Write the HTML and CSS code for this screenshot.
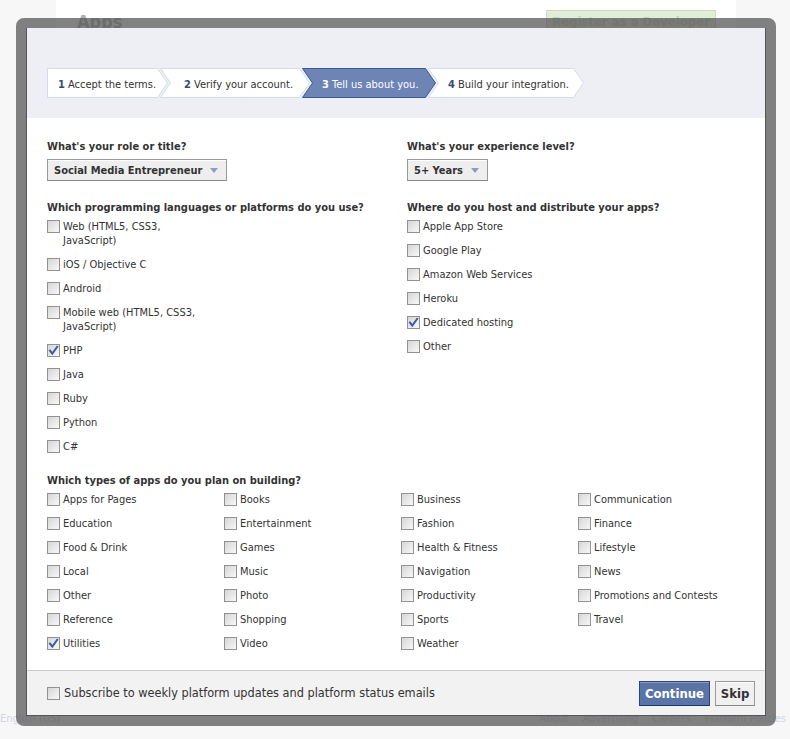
FILE: index.html
```html
<!DOCTYPE html>
<html>
<head>
<meta charset="utf-8">
<title>Apps</title>
<link rel="stylesheet" href="styles.css">
</head>
<body>
<div class="page">
  <div class="column">
    <div class="col-head">
      <h1 class="apps-title">Apps</h1>
      <span class="reg-btn">Register as a Developer</span>
    </div>
  </div>
  <div class="page-foot">
    <span class="lang">English (US)</span>
    <nav class="foot-links"><span>About</span><span>Advertising</span><span>Careers</span><span>Platform Policies</span></nav>
  </div>
</div>

<div class="dialog">
  <div class="dialog-inner">
    <div class="dialog-head">
      <div class="steps">
        <div class="step step-1">
          <svg class="step-bg" width="121" height="30" viewBox="0 0 121 30"><polygon points="0.5,0.5 110.5,0.5 120.5,15 110.5,29.5 0.5,29.5" /></svg>
          <span class="step-text"><b>1</b> Accept the terms.</span>
        </div>
        <div class="step step-2">
          <svg class="step-bg" width="150" height="30" viewBox="0 0 150 30"><polygon points="0.5,0.5 139.5,0.5 149.5,15 139.5,29.5 0.5,29.5 10.5,15" /></svg>
          <span class="step-text"><b>2</b> Verify your account.</span>
        </div>
        <div class="step step-3 active">
          <svg class="step-bg" width="134" height="30" viewBox="0 0 134 30"><polygon points="0.5,0.5 123.5,0.5 133.5,15 123.5,29.5 0.5,29.5 10.5,15" /></svg>
          <span class="step-text"><b>3</b> Tell us about you.</span>
        </div>
        <div class="step step-4">
          <svg class="step-bg" width="156" height="30" viewBox="0 0 156 30"><polygon points="0.5,0.5 145.5,0.5 155.5,15 145.5,29.5 0.5,29.5 10.5,15" /></svg>
          <span class="step-text"><b>4</b> Build your integration.</span>
        </div>
      </div>
    </div>

    <div class="dialog-body">
      <div class="two-col">
        <div class="col">
          <div class="q">What's your role or title?</div>
          <span class="select">Social Media Entrepreneur<i class="caret"></i></span>
        </div>
        <div class="col">
          <div class="q">What's your experience level?</div>
          <span class="select">5+ Years<i class="caret"></i></span>
        </div>
      </div>

      <div class="two-col section">
        <div class="col">
          <div class="q">Which programming languages or platforms do you use?</div>
          <ul class="checks narrow">
            <li class="check"><span class="box"></span><span class="lbl">Web (HTML5, CSS3, JavaScript)</span></li>
            <li class="check"><span class="box"></span><span class="lbl">iOS / Objective C</span></li>
            <li class="check"><span class="box"></span><span class="lbl">Android</span></li>
            <li class="check"><span class="box"></span><span class="lbl">Mobile web (HTML5, CSS3, JavaScript)</span></li>
            <li class="check"><span class="box checked"><svg viewBox="0 0 11 11" width="11" height="11"><path d="M2 5.6 L4.3 8.6 L9.2 1.8" /></svg></span><span class="lbl">PHP</span></li>
            <li class="check"><span class="box"></span><span class="lbl">Java</span></li>
            <li class="check"><span class="box"></span><span class="lbl">Ruby</span></li>
            <li class="check"><span class="box"></span><span class="lbl">Python</span></li>
            <li class="check"><span class="box"></span><span class="lbl">C#</span></li>
          </ul>
        </div>
        <div class="col">
          <div class="q">Where do you host and distribute your apps?</div>
          <ul class="checks">
            <li class="check"><span class="box"></span><span class="lbl">Apple App Store</span></li>
            <li class="check"><span class="box"></span><span class="lbl">Google Play</span></li>
            <li class="check"><span class="box"></span><span class="lbl">Amazon Web Services</span></li>
            <li class="check"><span class="box"></span><span class="lbl">Heroku</span></li>
            <li class="check"><span class="box checked"><svg viewBox="0 0 11 11" width="11" height="11"><path d="M2 5.6 L4.3 8.6 L9.2 1.8" /></svg></span><span class="lbl">Dedicated hosting</span></li>
            <li class="check"><span class="box"></span><span class="lbl">Other</span></li>
          </ul>
        </div>
      </div>

      <div class="section">
        <div class="q">Which types of apps do you plan on building?</div>
        <ul class="checks app-grid">
          <li class="check"><span class="box"></span><span class="lbl">Apps for Pages</span></li>
          <li class="check"><span class="box"></span><span class="lbl">Books</span></li>
          <li class="check"><span class="box"></span><span class="lbl">Business</span></li>
          <li class="check"><span class="box"></span><span class="lbl">Communication</span></li>
          <li class="check"><span class="box"></span><span class="lbl">Education</span></li>
          <li class="check"><span class="box"></span><span class="lbl">Entertainment</span></li>
          <li class="check"><span class="box"></span><span class="lbl">Fashion</span></li>
          <li class="check"><span class="box"></span><span class="lbl">Finance</span></li>
          <li class="check"><span class="box"></span><span class="lbl">Food &amp; Drink</span></li>
          <li class="check"><span class="box"></span><span class="lbl">Games</span></li>
          <li class="check"><span class="box"></span><span class="lbl">Health &amp; Fitness</span></li>
          <li class="check"><span class="box"></span><span class="lbl">Lifestyle</span></li>
          <li class="check"><span class="box"></span><span class="lbl">Local</span></li>
          <li class="check"><span class="box"></span><span class="lbl">Music</span></li>
          <li class="check"><span class="box"></span><span class="lbl">Navigation</span></li>
          <li class="check"><span class="box"></span><span class="lbl">News</span></li>
          <li class="check"><span class="box"></span><span class="lbl">Other</span></li>
          <li class="check"><span class="box"></span><span class="lbl">Photo</span></li>
          <li class="check"><span class="box"></span><span class="lbl">Productivity</span></li>
          <li class="check"><span class="box"></span><span class="lbl">Promotions and Contests</span></li>
          <li class="check"><span class="box"></span><span class="lbl">Reference</span></li>
          <li class="check"><span class="box"></span><span class="lbl">Shopping</span></li>
          <li class="check"><span class="box"></span><span class="lbl">Sports</span></li>
          <li class="check"><span class="box"></span><span class="lbl">Travel</span></li>
          <li class="check"><span class="box checked"><svg viewBox="0 0 11 11" width="11" height="11"><path d="M2 5.6 L4.3 8.6 L9.2 1.8" /></svg></span><span class="lbl">Utilities</span></li>
          <li class="check"><span class="box"></span><span class="lbl">Video</span></li>
          <li class="check"><span class="box"></span><span class="lbl">Weather</span></li>
        </ul>
      </div>
    </div>

    <div class="dialog-foot">
      <div class="check sub"><span class="box"></span><span class="lbl">Subscribe to weekly platform updates and platform status emails</span></div>
      <div class="buttons">
        <span class="btn btn-primary">Continue</span>
        <span class="btn btn-default">Skip</span>
      </div>
    </div>
  </div>
</div>
</body>
</html>
```

FILE: styles.css
```css
* { box-sizing: border-box; }

html, body {
  margin: 0;
  padding: 0;
}

body {
  background: #f7f7f7;
  font-family: Tahoma, "DejaVu Sans Condensed", "Liberation Sans", sans-serif;
  font-size: 11px;
  color: #333;
  overflow: hidden;
  width: 790px;
  height: 739px;
}

/* background page */
.page {
  width: 790px;
}

.column {
  margin-left: 56px;
  width: 680px;
  height: 710px;
  background: #fff;
}

.col-head {
  display: flex;
  justify-content: space-between;
  align-items: flex-start;
  padding: 10px 20px 0 21px;
}

.apps-title {
  margin: 2px 0 0;
  font-size: 18px;
  font-weight: bold;
  color: #b0b0b0;
  line-height: 20px;
}

.reg-btn {
  display: block;
  width: 170px;
  height: 24px;
  line-height: 22px;
  text-align: center;
  background: #e1edd9;
  border: 1px solid #c9dcbc;
  color: #c3d3ba;
  font-weight: bold;
  font-size: 13px;
}

.page-foot {
  display: flex;
  align-items: center;
  height: 16px;
  color: #d0d5e6;
  font-size: 11px;
}

.foot-links {
  display: flex;
  gap: 14px;
  margin-left: auto;
  padding-right: 4px;
}

/* dialog overlay */
.dialog {
  position: absolute;
  left: 16px;
  top: 18px;
  width: 760px;
  height: 708px;
  border: 10px solid rgba(82, 82, 82, 0.72);
  border-radius: 8px;
  background-clip: padding-box;
}

.dialog-inner {
  height: 100%;
  background: #fff;
  border: 1px solid #555;
  border-top: 0;
  display: flex;
  flex-direction: column;
}

.dialog-head {
  background: #edeff4;
  height: 90px;
  padding: 40px 0 0 20px;
}

.steps {
  display: flex;
  height: 30px;
}

.step {
  display: grid;
  height: 30px;
}

.step + .step {
  margin-left: -8px;
}

.step-bg,
.step-text {
  grid-area: 1 / 1;
}

.step-bg polygon {
  fill: #fff;
  stroke: #d4dbe9;
  stroke-width: 1;
}

.step.active .step-bg polygon {
  fill: #6d84b4;
  stroke: #3b5998;
}

.step-text {
  align-self: center;
  font-size: 11px;
  color: #333;
  white-space: nowrap;
  line-height: 14px;
  padding-top: 3px;
}

.step-text b {
  color: #3b4b70;
}

.step.active .step-text,
.step.active .step-text b {
  color: #fff;
}

.step-1 { width: 121px; }
.step-1 .step-text { padding-left: 11px; }
.step-2 { width: 150px; }
.step-2 .step-text { padding-left: 24px; }
.step-3 { width: 134px; }
.step-3 .step-text { padding-left: 20px; }
.step-4 { width: 156px; }
.step-4 .step-text { padding-left: 20px; }

/* body */
.dialog-body {
  flex: 1;
  padding: 22px 20px 19px 20px;
}

.two-col {
  display: grid;
  grid-template-columns: 360px 1fr;
}

.section {
  margin-top: 20px;
}

.q {
  font-weight: bold;
  line-height: 14px;
  margin-bottom: 5px;
  color: #333;
}

.select {
  display: inline-flex;
  align-items: center;
  height: 22px;
  padding: 0 8px 0 6px;
  border: 1px solid #999;
  border-bottom-color: #888;
  background: #eee;
  box-shadow: inset 0 1px 0 #fff;
  font-weight: bold;
  color: #333;
}

.caret {
  display: inline-block;
  width: 0;
  height: 0;
  margin-left: 8px;
  border-left: 4.5px solid transparent;
  border-right: 4.5px solid transparent;
  border-top: 5px solid #8d9cbf;
}

.checks {
  list-style: none;
  margin: 0;
  padding: 0;
  display: flex;
  flex-direction: column;
  gap: 10px;
}

.checks.narrow .lbl {
  max-width: 140px;
}

.check {
  display: flex;
  align-items: flex-start;
  gap: 3px;
  line-height: 14px;
}

.box {
  flex: none;
  display: flex;
  align-items: center;
  justify-content: center;
  width: 13px;
  height: 13px;
  border: 1px solid #929292;
  background: linear-gradient(135deg, #d6d6d6 0%, #f8f8f8 100%);
}

.box svg path {
  fill: none;
  stroke: #3b5aa0;
  stroke-width: 2;
  stroke-linecap: square;
}

.lbl {
  color: #333;
}

.app-grid {
  display: grid;
  grid-template-columns: repeat(4, 177px);
  row-gap: 10px;
  column-gap: 0;
}

/* footer */
.dialog-foot {
  height: 45px;
  border-top: 1px solid #ccc;
  background: #f2f2f2;
  display: flex;
  align-items: center;
  justify-content: space-between;
  padding: 0 10px 0 20px;
}

.check.sub {
  align-items: center;
  gap: 4px;
  font-size: 12.6px;
  line-height: 16px;
}

.buttons {
  display: flex;
  gap: 5px;
}

.btn {
  display: inline-flex;
  align-items: center;
  justify-content: center;
  height: 25px;
  font-weight: bold;
  font-size: 13px;
  border: 1px solid;
}

.btn-primary {
  width: 71px;
  background: #5b74a8;
  border-color: #29447e #29447e #1a356e;
  box-shadow: inset 0 1px 0 #8a9cc2;
  color: #fff;
}

.btn-default {
  width: 40px;
  background: #f0f0f0;
  border-color: #999 #999 #888;
  box-shadow: inset 0 1px 0 #fff;
  color: #333;
}
```
